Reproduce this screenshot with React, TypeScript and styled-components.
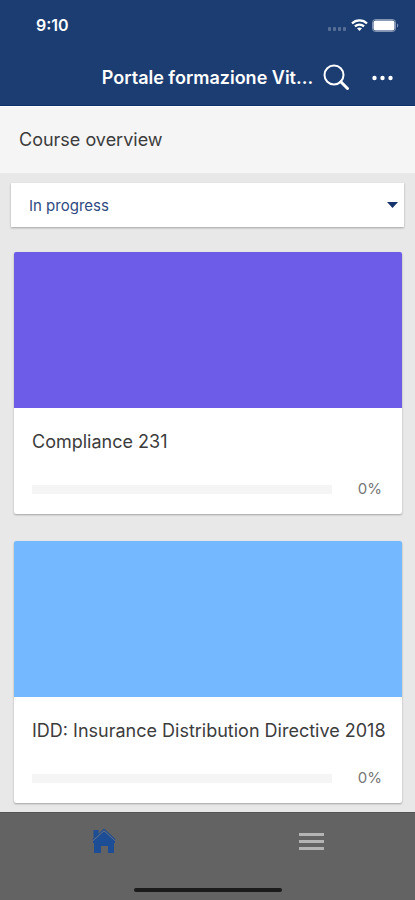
import React from "react";
import styled, { createGlobalStyle } from "styled-components";

const GlobalStyle = createGlobalStyle`
  *, *::before, *::after { box-sizing: border-box; }
  body {
    margin: 0;
    background: #e8e8e8;
    color: #3c3c3c;
    font-family: Inter, "Liberation Sans", sans-serif;
  }
  button, select { font: inherit; }
`;

const Page = styled.div`
  min-height: 100vh;
  display: flex;
  flex-direction: column;
`;

const Header = styled.header`
  background: #1c3d72;
  color: #fff;
  border-bottom: 1px solid #10306a;
`;

const StatusBar = styled.div`
  display: flex;
  align-items: center;
  justify-content: space-between;
  height: 50px;
  padding: 0 16px 0 36px;
`;

const Clock = styled.time`
  font-size: 16px;
  line-height: 20px;
  font-weight: 600;
`;

const StatusIcons = styled.div`
  display: flex;
  align-items: center;
  gap: 4px;
`;

const Toolbar = styled.div`
  display: grid;
  grid-template-columns: 1fr auto 1fr;
  align-items: center;
  height: 55px;
`;

const Title = styled.h1`
  grid-column: 2;
  margin: 0;
  font-size: 18px;
  line-height: 24px;
  font-weight: 600;
  white-space: nowrap;
`;

const Actions = styled.div`
  display: flex;
  align-items: center;
  justify-content: space-between;
  padding: 0 20px 0 10px;
`;

const IconButton = styled.button`
  display: flex;
  padding: 0;
  border: 0;
  background: none;
  color: inherit;
  cursor: pointer;
`;

const SectionTitle = styled.h2`
  margin: 0;
  padding: 21px 19px;
  border-top: 1px solid #fff;
  background: #f5f5f5;
  font-size: 18px;
  line-height: 24px;
  font-weight: 400;
`;

const Main = styled.main`
  flex: 1;
`;

const Filter = styled.div`
  display: grid;
  align-items: center;
  height: 44px;
  margin: 10px 11px 25px;
  background: #fff;
  color: #2e4a80;
  box-shadow: 0 1px 2px rgba(0, 0, 0, 0.3);

  & > * { grid-area: 1 / 1; }
  & > svg { justify-self: end; margin-right: 6px; pointer-events: none; }
`;

const FilterSelect = styled.select`
  width: 100%;
  height: 100%;
  padding: 0 18px;
  border: 0;
  appearance: none;
  background: transparent;
  color: inherit;
  font-size: 15px;
`;

const CourseList = styled.div`
  display: grid;
  gap: 27px;
  padding: 0 13px 9px 14px;
`;

const Card = styled.article`
  overflow: hidden;
  border-radius: 2px;
  background: #fff;
  box-shadow: 0 1px 2px rgba(0, 0, 0, 0.3);
`;

const Cover = styled.div<{ $color: string }>`
  height: 156px;
  background: ${({ $color }) => $color};
`;

const CardBody = styled.div`
  padding: 22px 20px 15px 18px;
`;

const CourseName = styled.h3`
  margin: 0 0 25px;
  font-size: 18px;
  line-height: 24px;
  font-weight: 400;
  white-space: nowrap;
`;

const ProgressRow = styled.div`
  display: flex;
  align-items: center;
  gap: 20px;
`;

const Track = styled.div`
  flex: 1;
  height: 9px;
  background: #f5f5f5;
`;

const Fill = styled.div`
  height: 100%;
  background: #1c3d72;
`;

const Percent = styled.span`
  width: 30px;
  font-size: 15px;
  line-height: 20px;
  color: #767676;
  text-align: right;
`;

const Footer = styled.footer`
  display: flex;
  flex-direction: column;
  justify-content: space-between;
  align-items: center;
  height: 88px;
  padding-bottom: 8px;
  border-top: 1px solid #555;
  background: #636363;
`;

const Tabs = styled.nav`
  display: grid;
  grid-template-columns: 1fr 1fr;
  width: 100%;
  height: 56px;
`;

const Tab = styled.button<{ $active?: boolean }>`
  display: flex;
  align-items: center;
  justify-content: center;
  padding: 0;
  border: 0;
  background: none;
  color: ${({ $active }) => ($active ? "#1d4d94" : "#b4b4b4")};
  cursor: pointer;
`;

const HomeIndicator = styled.div`
  width: 148px;
  height: 4px;
  border-radius: 2px;
  background: #1b1b1b;
`;

const courses = [
  { name: "Compliance 231", color: "#6c5ce7", progress: 0 },
  { name: "IDD: Insurance Distribution Directive 2018", color: "#74b9ff", progress: 0 },
];

const Signal = () => (
  <svg width="19" height="16" viewBox="0 0 19 16" fill="#fff" opacity="0.25" aria-hidden="true">
    <rect x="0" y="10" width="3" height="4" rx="1" />
    <rect x="5" y="10" width="3" height="4" rx="1" />
    <rect x="10" y="10" width="3" height="4" rx="1" />
    <rect x="15" y="10" width="3" height="4" rx="1" />
  </svg>
);

const Wifi = () => (
  <svg width="17" height="12" viewBox="0 0 17 12" fill="none" stroke="#fff" strokeWidth="2.2" aria-hidden="true">
    <path d="M1 4.4C5 .3 12 .3 16 4.4" />
    <path d="M3.9 7.4c2.6-2.5 6.6-2.5 9.2 0" />
    <path d="M6 9.3c1.5-1.2 3.5-1.2 5 0L8.5 12z" fill="#fff" stroke="none" />
  </svg>
);

const Battery = () => (
  <svg width="27" height="13" viewBox="0 0 27 13" aria-hidden="true">
    <rect x=".5" y=".5" width="23" height="12" rx="3" fill="none" stroke="#fff" strokeOpacity=".45" />
    <rect x="1.5" y="1.5" width="21" height="10" rx="2" fill="#fff" />
    <path d="M25 4.5c1.7.6 1.7 3.4 0 4z" fill="#fff" opacity=".45" />
  </svg>
);

const Search = () => (
  <svg width="27" height="27" viewBox="0 0 27 27" fill="none" stroke="currentColor" aria-hidden="true">
    <circle cx="11" cy="11" r="9.5" strokeWidth="2" />
    <path d="M17.8 17.8 24.5 24.5" strokeWidth="3" strokeLinecap="round" />
  </svg>
);

const More = () => (
  <svg width="23" height="6" viewBox="0 0 23 6" fill="currentColor" aria-hidden="true">
    <circle cx="2.5" cy="3" r="2.2" />
    <circle cx="10.5" cy="3" r="2.2" />
    <circle cx="18.5" cy="3" r="2.2" />
  </svg>
);

const Home = () => (
  <svg width="24" height="26" viewBox="0 0 24 26" fill="currentColor" aria-hidden="true">
    <path d="M1.5 2h5v4l-5 4z" />
    <path d="M12 3 23 13v2h-1v10h-6v-7h-7v7H2V15H1v-2z" />
    <path d="M.8 11.6 12 1.2l11.2 10.4" fill="none" stroke="currentColor" strokeWidth="1.2" />
    <path d="M1 12.8 12 2.8l11 10" fill="none" stroke="#60779a" strokeWidth=".7" />
  </svg>
);

const Menu = () => (
  <svg width="25" height="17" viewBox="0 0 25 17" fill="currentColor" aria-hidden="true">
    <rect width="25" height="3" />
    <rect y="7" width="25" height="3" />
    <rect y="14" width="25" height="3" />
  </svg>
);

export default function App() {
  return (
    <Page>
      <GlobalStyle />
      <Header>
        <StatusBar>
          <Clock>9:10</Clock>
          <StatusIcons>
            <Signal />
            <Wifi />
            <Battery />
          </StatusIcons>
        </StatusBar>
        <Toolbar>
          <Title>Portale formazione Vit...</Title>
          <Actions>
            <IconButton type="button" aria-label="Search"><Search /></IconButton>
            <IconButton type="button" aria-label="More options"><More /></IconButton>
          </Actions>
        </Toolbar>
      </Header>
      <Main>
        <SectionTitle id="overview">Course overview</SectionTitle>
        <Filter>
          <FilterSelect aria-labelledby="overview" defaultValue="progress">
            <option value="progress">In progress</option>
          </FilterSelect>
          <svg width="11" height="6" viewBox="0 0 11 6" fill="#16346c" aria-hidden="true">
            <path d="M0 0h11L5.5 6z" />
          </svg>
        </Filter>
        <CourseList>
          {courses.map(({ name, color, progress }) => (
            <Card key={name}>
              <Cover $color={color} />
              <CardBody>
                <CourseName>{name}</CourseName>
                <ProgressRow>
                  <Track role="progressbar" aria-label={name} aria-valuenow={progress}>
                    <Fill style={{ width: `${progress}%` }} />
                  </Track>
                  <Percent>{progress}%</Percent>
                </ProgressRow>
              </CardBody>
            </Card>
          ))}
        </CourseList>
      </Main>
      <Footer>
        <Tabs>
          <Tab type="button" $active aria-label="Home"><Home /></Tab>
          <Tab type="button" aria-label="Menu"><Menu /></Tab>
        </Tabs>
        <HomeIndicator />
      </Footer>
    </Page>
  );
}
